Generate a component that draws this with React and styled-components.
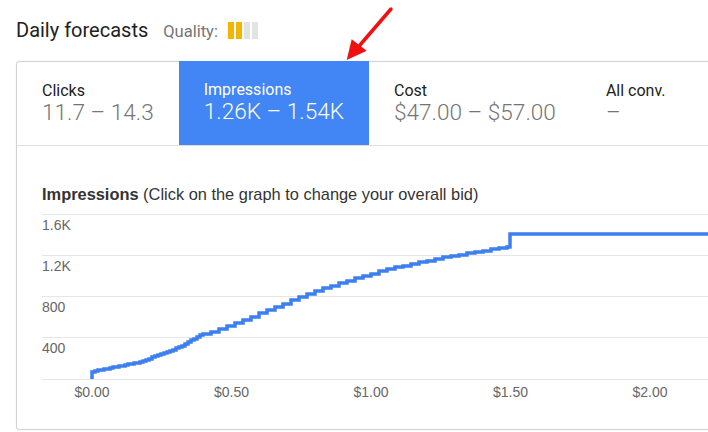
import React from "react";
import styled, { createGlobalStyle } from "styled-components";

const Global = createGlobalStyle`
  html, body { margin: 0; padding: 0; background: #fff; }
  body { width: 708px; height: 432px; overflow: hidden; font-family: Roboto, "Liberation Sans", Arial, sans-serif; }
`;

const Page = styled.div`
  position: relative;
  padding: 18px 0 0 16px;
`;

const Header = styled.div`
  display: flex;
  align-items: baseline;
  height: 24px;
  margin-bottom: 19px;
`;

const Title = styled.h1`
  margin: 0;
  font-size: 20px;
  line-height: 24px;
  font-weight: 400;
  color: #212121;
`;

const QualityLabel = styled.span`
  margin-left: 15px;
  font-size: 16.5px;
  line-height: 24px;
  color: #757575;
`;

const Bars = styled.div`
  display: flex;
  gap: 2px;
  margin-left: 10px;
  align-self: center;
`;

const Bar = styled.span`
  width: 6px;
  height: 17px;
  background: ${(p) => (p.$filled ? "#f4b400" : "#e3e3e3")};
`;

const Card = styled.div`
  width: 760px;
  height: 367px;
  border: 1px solid #d2d2d2;
  border-radius: 3px;
  box-shadow: 0 0 1px rgba(0, 0, 0, 0.18);
  display: flex;
  flex-direction: column;
`;

const Tabs = styled.div`
  display: flex;
  height: 83px;
  border-bottom: 1px solid #e0e0e0;
`;

const Tab = styled.div`
  padding: 19px 25px 0;
  margin-top: ${(p) => (p.$active ? "-1px" : "0")};
  height: ${(p) => (p.$active ? "84px" : "83px")};
  box-sizing: border-box;
  background: ${(p) => (p.$active ? "#4285f4" : "transparent")};
`;

const TabLabel = styled.div`
  font-size: 16px;
  line-height: 19px;
  color: ${(p) => (p.$active ? "#ffffff" : "#212121")};
  white-space: nowrap;
`;

const TabValue = styled.div`
  font-size: 22.6px;
  line-height: 26px;
  font-weight: 300;
  color: ${(p) => (p.$active ? "#ffffff" : "#757575")};
  white-space: nowrap;
`;

const ChartSection = styled.div`
  padding: 39px 0 0 25px;
`;

const ChartTitle = styled.div`
  font-family: "Liberation Sans", Arial, sans-serif;
  font-size: 16.4px;
  line-height: 18px;
  color: #333;
  margin-bottom: 5px;
  white-space: nowrap;
  b { font-weight: 700; }
`;

const ChartSvg = styled.svg`
  display: block;
  font-family: "Liberation Sans", Arial, sans-serif;
`;

const Overlay = styled.svg`
  position: absolute;
  left: 0;
  top: 0;
  pointer-events: none;
`;

const tabs = [
  { label: "Clicks", value: "11.7 – 14.3" },
  { label: "Impressions", value: "1.26K – 1.54K", active: true },
  { label: "Cost", value: "$47.00 – $57.00" },
  { label: "All conv.", value: "–" },
];

const pts = [
  [50, 164], [53, 163], [98, 154], [111, 149], [138, 139], [158, 127],
  [171, 123], [191, 116], [218, 105], [275, 82], [341, 62], [408, 48], [468, 38],
];

function interp(x) {
  for (let i = 0; i < pts.length - 1; i++) {
    const [x0, y0] = pts[i];
    const [x1, y1] = pts[i + 1];
    if (x >= x0 && x <= x1) return y0 + ((y1 - y0) * (x - x0)) / (x1 - x0);
  }
  return pts[pts.length - 1][1];
}

function buildPath() {
  let d = "M 50 171 V 164";
  let x = 50;
  while (x < 464) {
    x += x < 160 ? 3 : 8;
    if (x > 466) x = 466;
    d += ` H ${x} V ${Math.round(interp(x))}`;
  }
  d += " H 468 V 26 H 720";
  return d;
}

const grid = [
  { y: 6, label: "1.6K" },
  { y: 47, label: "1.2K" },
  { y: 88, label: "800" },
  { y: 129, label: "400" },
  { y: 171, label: null },
];

const xTicks = [
  { x: 50, label: "$0.00" },
  { x: 189.5, label: "$0.50" },
  { x: 329, label: "$1.00" },
  { x: 468.5, label: "$1.50" },
  { x: 608, label: "$2.00" },
];

export default function App() {
  return (
    <>
      <Global />
      <Page>
        <Header>
          <Title>Daily forecasts</Title>
          <QualityLabel>Quality:</QualityLabel>
          <Bars>
            <Bar $filled />
            <Bar $filled />
            <Bar />
            <Bar />
          </Bars>
        </Header>
        <Card>
          <Tabs>
            {tabs.map((t) => (
              <Tab key={t.label} $active={t.active}>
                <TabLabel $active={t.active}>{t.label}</TabLabel>
                <TabValue $active={t.active}>{t.value}</TabValue>
              </Tab>
            ))}
          </Tabs>
          <ChartSection>
            <ChartTitle>
              <b>Impressions</b> (Click on the graph to change your overall bid)
            </ChartTitle>
            <ChartSvg width="720" height="200" viewBox="0 0 720 200">
              {grid.map((g) => (
                <g key={g.y}>
                  <line x1="0" x2="720" y1={g.y + 0.5} y2={g.y + 0.5} stroke="#e6e6e6" strokeWidth="1" />
                  {g.label && (
                    <text x="0" y={g.y + 16} fontSize="14" fill="#666">
                      {g.label}
                    </text>
                  )}
                </g>
              ))}
              {xTicks.map((t) => (
                <text key={t.label} x={t.x} y="189" fontSize="14" fill="#666" textAnchor="middle">
                  {t.label}
                </text>
              ))}
              <path d={buildPath()} fill="none" stroke="#3b7ff0" strokeWidth="3.5" strokeLinejoin="miter" />
            </ChartSvg>
          </ChartSection>
        </Card>
        <Overlay width="708" height="80" viewBox="0 0 708 80">
          <line x1="391" y1="9" x2="360" y2="45" stroke="#f01010" strokeWidth="3.5" strokeLinecap="round" />
          <polygon points="346.7,60 351.7,39.3 366.7,50.7" fill="#f01010" />
        </Overlay>
      </Page>
    </>
  );
}
